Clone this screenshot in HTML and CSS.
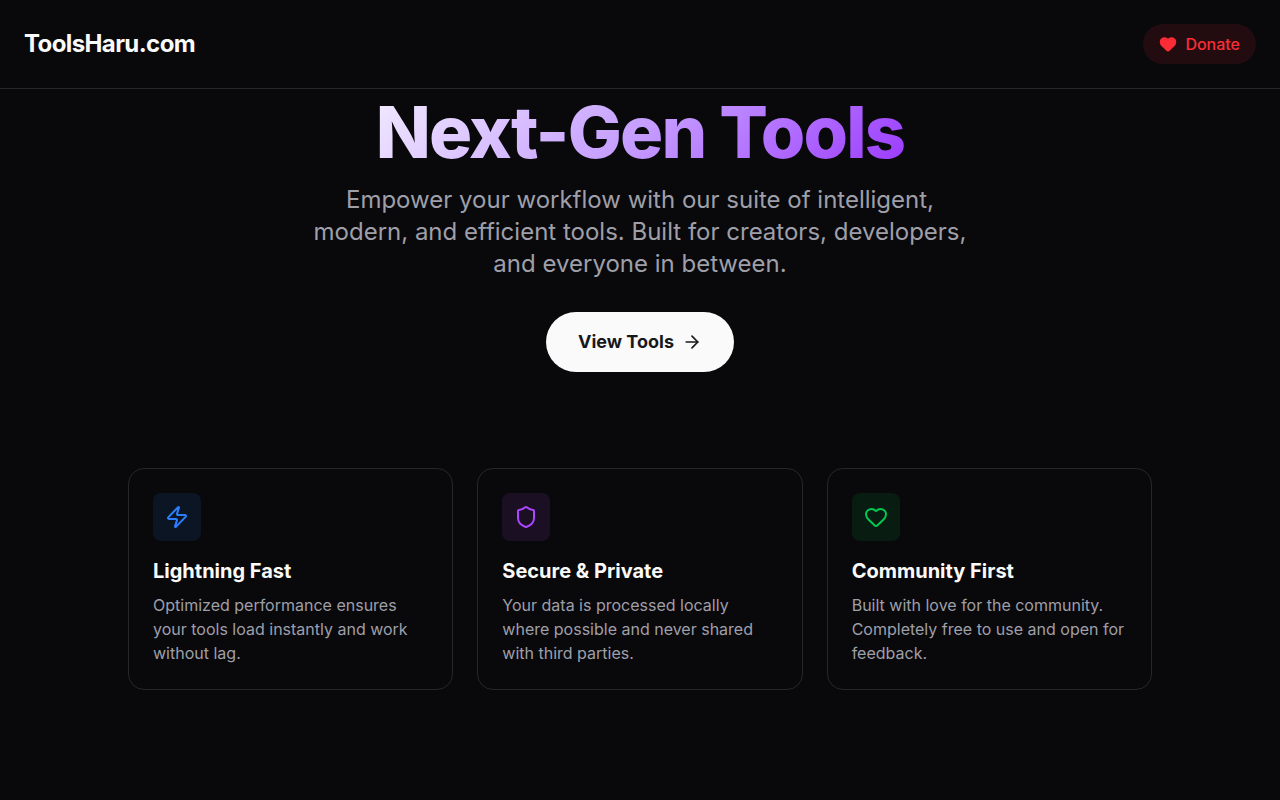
FILE: index.html
```html
<!DOCTYPE html>
<html lang="en">

<head>
  <meta charset="UTF-8">
  <meta name="viewport" content="width=device-width, initial-scale=1.0">
  <title>ToolsHaru.com</title>
  <link rel="stylesheet" href="styles.css">
</head>

<body>

  <header class="navbar">
    <a class="logo" href="#">ToolsHaru.com</a>
    <button class="donate" type="button">
      <svg class="icon-small" viewBox="0 0 24 24" aria-hidden="true">
        <path d="M2 9.5a5.5 5.5 0 0 1 9.591-3.676.56.56 0 0 0 .818 0A5.49 5.49 0 0 1 22 9.5c0 2.29-1.5 4-3 5.5l-5.492 5.313a2 2 0 0 1-3 .019L5 15c-1.5-1.5-3-3.2-3-5.5" />
      </svg>
      Donate
    </button>
  </header>

  <main>
    <section class="hero">
      <h1>Next-Gen Tools</h1>
      <p>Empower your workflow with our suite of intelligent, modern, and efficient tools. Built for creators, developers, and everyone in between.</p>
      <a class="cta" href="#tools">
        View Tools
        <svg class="icon-medium" viewBox="0 0 24 24" aria-hidden="true">
          <path d="M5 12h14" />
          <path d="m12 5 7 7-7 7" />
        </svg>
      </a>
    </section>

    <section class="features" id="tools">
      <article class="card">
        <div class="badge blue">
          <svg viewBox="0 0 24 24" aria-hidden="true">
            <path d="M4 14a1 1 0 0 1-.78-1.63l9.9-10.2a.5.5 0 0 1 .86.46l-1.92 6.02A1 1 0 0 0 13 10h7a1 1 0 0 1 .78 1.63l-9.9 10.2a.5.5 0 0 1-.86-.46l1.92-6.02A1 1 0 0 0 11 14z" />
          </svg>
        </div>
        <h2>Lightning Fast</h2>
        <p>Optimized performance ensures your tools load instantly and work without lag.</p>
      </article>

      <article class="card">
        <div class="badge purple">
          <svg viewBox="0 0 24 24" aria-hidden="true">
            <path d="M20 13c0 5-3.5 7.5-7.66 8.95a1 1 0 0 1-.67-.01C7.5 20.5 4 18 4 13V6a1 1 0 0 1 1-1c2 0 4.5-1.2 6.24-2.72a1.17 1.17 0 0 1 1.52 0C14.51 3.81 17 5 19 5a1 1 0 0 1 1 1z" />
          </svg>
        </div>
        <h2>Secure &amp; Private</h2>
        <p>Your data is processed locally where possible and never shared with third parties.</p>
      </article>

      <article class="card">
        <div class="badge green">
          <svg viewBox="0 0 24 24" aria-hidden="true">
            <path d="M2 9.5a5.5 5.5 0 0 1 9.591-3.676.56.56 0 0 0 .818 0A5.49 5.49 0 0 1 22 9.5c0 2.29-1.5 4-3 5.5l-5.492 5.313a2 2 0 0 1-3 .019L5 15c-1.5-1.5-3-3.2-3-5.5" />
          </svg>
        </div>
        <h2>Community First</h2>
        <p>Built with love for the community. Completely free to use and open for feedback.</p>
      </article>
    </section>
  </main>

</body>

</html>
```
FILE: styles.css
```css
* {
  box-sizing: border-box;
}

body {
  margin: 0;
  background-color: #09090b;
  color: #fafafa;
  font-family: Inter, sans-serif;
  font-size: 16px;
  line-height: 24px;
}

h1,
h2,
p {
  margin: 0;
}

svg {
  width: 24px;
  height: 24px;
  fill: none;
  stroke: currentColor;
  stroke-width: 2;
  stroke-linecap: round;
  stroke-linejoin: round;
}

.navbar {
  display: flex;
  align-items: center;
  justify-content: space-between;
  padding: 24px;
  border-bottom: 1px solid #27272a;
}

.logo {
  color: inherit;
  font-size: 24px;
  font-weight: 700;
  line-height: 32px;
  letter-spacing: -0.025em;
  text-decoration: none;
}

.donate {
  display: flex;
  align-items: center;
  gap: 8px;
  padding: 8px 16px;
  border: 0;
  border-radius: 20px;
  background-color: rgba(251, 44, 54, 0.1);
  color: #fb2c36;
  font: inherit;
  font-weight: 500;
  cursor: pointer;
}

.donate .icon-small {
  width: 18px;
  height: 18px;
  fill: currentColor;
}

.hero {
  display: flex;
  flex-direction: column;
  align-items: center;
  padding: 7px 24px 96px;
  text-align: center;
}

.hero h1 {
  background-image: linear-gradient(135deg, #f1eaff, #c59dff 50%, #9c3bff);
  background-clip: text;
  color: transparent;
  font-size: 72px;
  font-weight: 800;
  line-height: 72px;
  letter-spacing: -0.025em;
}

.hero p {
  max-width: 672px;
  margin-top: 16px;
  color: #9f9fa9;
  font-size: 24px;
  line-height: 32px;
}

.cta {
  display: flex;
  align-items: center;
  gap: 8px;
  margin-top: 32px;
  padding: 16px 32px;
  border-radius: 30px;
  background-color: #fafafa;
  color: #18181b;
  font-size: 18px;
  font-weight: 700;
  line-height: 28px;
  text-decoration: none;
}

.icon-medium {
  width: 20px;
  height: 20px;
}

.features {
  display: grid;
  grid-template-columns: repeat(3, 1fr);
  gap: 24px;
  max-width: 1072px;
  margin: 0 auto;
  padding: 0 24px 96px;
}

.card {
  padding: 24px;
  border: 1px solid #27272a;
  border-radius: 16px;
}

.card h2 {
  margin: 16px 0 8px;
  font-size: 20px;
  line-height: 28px;
}

.card p {
  color: #9f9fa9;
}

.badge {
  display: flex;
  align-items: center;
  justify-content: center;
  width: 48px;
  height: 48px;
  border-radius: 8px;
}

.blue {
  background-color: rgba(43, 127, 255, 0.1);
  color: #2b7fff;
}

.purple {
  background-color: rgba(173, 70, 255, 0.1);
  color: #ad46ff;
}

.green {
  background-color: rgba(0, 201, 80, 0.1);
  color: #00c950;
}

@media (max-width: 768px) {
  .features {
    grid-template-columns: 1fr;
  }
}
```
